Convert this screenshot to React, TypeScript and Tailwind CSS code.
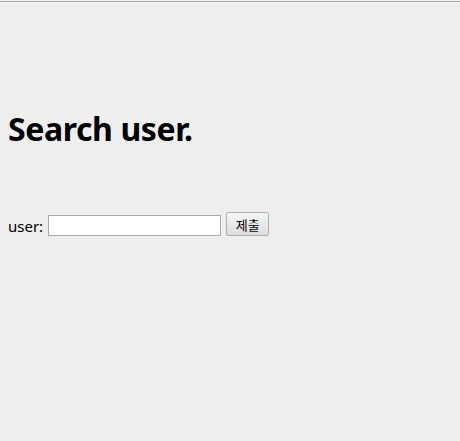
export default function App() {
  return (
    <div className="h-[441px] w-[460px] overflow-hidden bg-[#eeeeee] font-['Noto_Sans','Noto_Sans_CJK_KR',sans-serif] text-black">
      <div className="mt-px h-px bg-[#a8a8a8]" />
      <div className="px-2">
        <h1 className="mt-[106px] text-[32px] leading-[42px] font-bold tracking-[-0.4px]">Search user.</h1>
        <form className="mt-[62px] flex items-end gap-[5px] text-[15px]" onSubmit={e => e.preventDefault()}>
          <label className="flex items-end gap-[5px]">
            <span className="leading-5">user:</span>
            <input
              type="text"
              className="h-[21px] w-[173px] border border-[#a9a9a9] bg-white px-1 text-[13px] outline-none"
            />
          </label>
          <button
            type="submit"
            className="h-6 w-[43px] rounded-[2px] border border-[#adadad] bg-gradient-to-b from-[#f6f6f6] to-[#dddddd] text-[13px] leading-none font-['Noto_Sans_CJK_KR',sans-serif]"
          >
            제출
          </button>
        </form>
      </div>
    </div>
  )
}
